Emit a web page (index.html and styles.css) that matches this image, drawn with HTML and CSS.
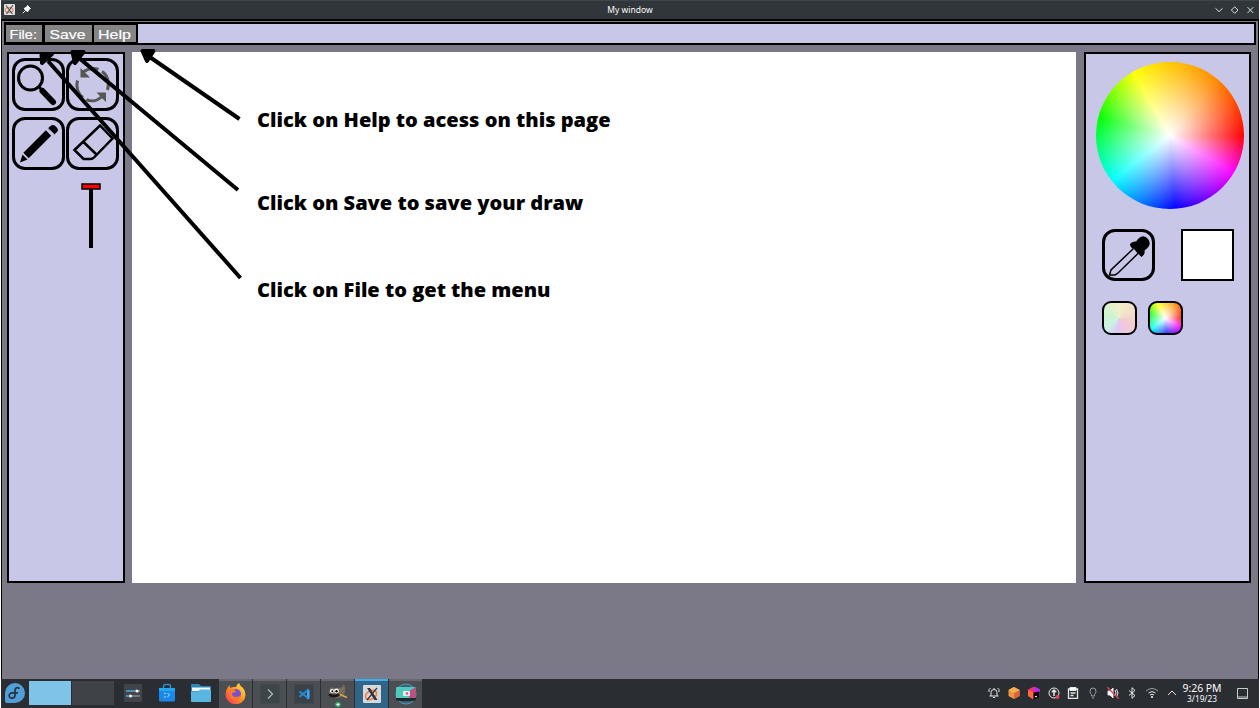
FILE: index.html
```html
<!DOCTYPE html>
<html lang="en">
<head>
<meta charset="utf-8">
<title>My window</title>
<link rel="stylesheet" href="styles.css">
</head>
<body>
<div class="screen">
  <header class="titlebar">
    <div class="title-left">
      <svg width="11" height="11" viewBox="0 0 11 11"><rect width="11" height="11" rx="1" fill="#dfe1e2"/><ellipse cx="5" cy="6" rx="4" ry="2.5" fill="none" stroke="#e58a5c" stroke-width="1.2"/><path d="M2 1.5 8.500 10M9 1 2.500 10" stroke="#50545a" stroke-width="1.200"/></svg>
      <svg width="9" height="9" viewBox="0 0 9 9"><path d="M5.500.5 8.500 3.500 7.200 4 5.800 6.500 4.800 6.300 2.700 4.200 2.500 3.200 5 2zM3.500 5.500.8 8.200" fill="#fff" stroke="#fff"/></svg>
    </div>
    <h1>My window</h1>
    <svg class="title-controls" width="42" height="12" viewBox="0 0 42 12" fill="none" stroke="#dfe1e2"><path d="M2.500 4.300 6 7.700 9.500 4.300M21.700 2.800 25 6.100 21.700 9.400 18.400 6.100zM34.500 3.200l5.800 5.800M40.300 3.200l-5.800 5.800"/></svg>
  </header>
  <main class="app">
    <nav class="menubar">
      <div class="menu menu-file"><svg width="36" height="18"><text x="3.500" y="13.500" textLength="27.500" lengthAdjust="spacingAndGlyphs">File:</text></svg></div>
      <div class="menu menu-save"><svg width="47" height="18"><text x="4.500" y="13.500" textLength="36" lengthAdjust="spacingAndGlyphs">Save</text></svg></div>
      <div class="menu menu-help"><svg width="42" height="18"><text x="4" y="13.500" textLength="33" lengthAdjust="spacingAndGlyphs">Help</text></svg></div>
    </nav>
    <div class="workspace">
      <aside class="panel tools">
        <div class="tool-grid">
          <div class="tool"><svg width="48" height="48" viewBox="0 0 48 48"><circle cx="15.500" cy="17" r="12" fill="none" stroke="#000" stroke-width="3"/><path d="M24 26 28.500 30.500" stroke="#000" stroke-width="3"/><path d="M27.500 30 38 41" stroke="#000" stroke-width="6" stroke-linecap="round"/></svg></div>
          <div class="tool"><svg width="48" height="48" viewBox="0 0 48 48" fill="none" stroke="#555753" stroke-width="3"><path d="M8.500 19.500C6.500 26 9 33 14 36.500M17.500 38.500C22 41 28 40 32.500 36M38.500 29C41 21 38 13.500 33 10.500M29.500 8.500C24.500 6.500 19 7.500 14 11"/><path d="M11.500 7v9.500H21zM37 41v-9.500H27.500z" fill="#555753" stroke="none"/></svg></div>
          <div class="tool"><svg width="48" height="48" viewBox="0 0 48 48"><path d="M11 35.500 33.500 13" stroke="#000" stroke-width="7.500"/><path d="M34.500 6.800Q37.500 3.500 40.500 6.200L42 7.700Q44 10 41.700 12.300L39.700 14.300 32.800 8.700zM7.500 34.500l5 5-7.500 3z"/><path d="M33 8l7 7" stroke="#88879c" stroke-width="1"/></svg></div>
          <div class="tool"><svg width="48" height="48" viewBox="0 0 48 48" fill="none" stroke="#000" stroke-width="2.500"><path d="M5.500 30 31 5.500 43.500 18.500 25 37.500Q23.500 39 21.500 39H14.500zM14.500 22 28 35"/></svg></div>
        </div>
        <svg class="slider" width="20" height="66" viewBox="0 0 20 66"><path d="M10 5v60" stroke="#000" stroke-width="4"/><rect x="1" y="1" width="18" height="5" fill="#f00" stroke="#000" stroke-width="1.500"/></svg>
      </aside>
      <section class="canvas">
        <p>Click on Help to acess on this page</p>
        <p>Click on Save to save your draw</p>
        <p>Click on File to get the menu</p>
      </section>
      <aside class="panel colors">
        <div class="wheel"></div>
        <div class="picker-row">
          <div class="tool"><svg width="48" height="48" viewBox="0 0 48 48"><path d="M28.500 16.500 6 38 4.500 43 10 43 12.500 41.500 33.500 21" fill="none" stroke="#000" stroke-width="1.500"/><path d="M25 12Q27 9 31 9.500L33.500 6.500Q39 2 43 7 47 12 42 16.500L39.500 18.500Q40.500 22 36.500 25L31.500 20 29 17Q25 15.500 25 12z"/></svg></div>
          <div class="current"></div>
        </div>
        <div class="swatches"><div class="swatch pale"></div><div class="swatch vivid"></div></div>
      </aside>
    </div>
  </main>
  <footer class="taskbar">
    <svg class="fedora" width="20" height="20" viewBox="0 0 20 20"><path d="M10 0a10 10 0 1 1 0 20H2Q0 20 0 18v-8A10 10 0 0 1 10 0z" fill="#519fd9"/><path d="M14 5.200C11.800 3.800 10 5.200 10 7.500v4.800c0 3.800-5.800 3.800-5.800.3 0-2 1.800-3 3.500-2.700h4.600" fill="none" stroke="#26323e" stroke-width="1.700" stroke-linecap="round"/></svg>
    <div class="pager"><i class="on"></i><i></i></div>
    <div class="launchers">
      <div><svg width="20" height="20" viewBox="0 0 20 20"><rect x="1" y="1" width="18" height="18" rx="1" fill="#414549"/><path d="M3 8h11M3 13h5" stroke="#4ba6db" stroke-width="1.500"/><path d="M14 8h3M8 13h9" stroke="#aaa" stroke-width="1"/><circle cx="14" cy="8" r="1.500" fill="#fff"/><circle cx="7.500" cy="13" r="1.500" fill="#fff"/></svg></div>
      <div><svg width="20" height="20" viewBox="0 0 20 20"><path d="M6.500 6V3.500Q6.500 1.500 8.500 1.500h3Q13.500 1.500 13.500 3.500V6" fill="none" stroke="#258cd8" stroke-width="1.500"/><path d="M2 5h16v12q0 1.500-1.500 1.500h-13Q2 18.500 2 17z" fill="#1989e8"/><path d="M2 5h16v3H2z" fill="#25a7ef"/><path d="m10.500 10 2 2-2 2" stroke="#b5e5ff" fill="none"/><circle cx="8" cy="10.500" r=".8" fill="#b5e5ff"/><circle cx="8" cy="14" r=".8" fill="#b5e5ff"/></svg></div>
      <div><svg width="20" height="20" viewBox="0 0 20 20"><path d="M0 2Q0 1 1 1h7l2 2h9q1 0 1 1v14q0 1-1 1H1q-1 0-1-1z" fill="#2988b8"/><path d="M1 4.500h18V8H1z" fill="#f5f7f8"/><path d="M0 8.500h7L9 6.500h11V18q0 1-1 1H1q-1 0-1-1z" fill="#58b6e3"/></svg></div>
    </div>
    <div class="tasks">
      <div class="task"><svg width="21" height="21" viewBox="0 0 21 21"><defs><linearGradient id="fox" x1="1" y1="0" x2="0" y2="1"><stop offset="0" stop-color="#fff04a"/><stop offset=".45" stop-color="#ff9a20"/><stop offset="1" stop-color="#f42a60"/></linearGradient></defs><path d="M11 4Q12 1 14 0q1 3 4 5 2.500 3 2.500 7A10 9.500 0 0 1 .5 11.500Q.5 7 3 4L4.500 2 5 5q2-1.500 6-1z" fill="url(#fox)"/><circle cx="11" cy="11" r="5" fill="#7651d4"/><path d="M5 6q4-1 6 3l-4 1q0 4 4 4 3 0 5-2-1 5-6 5-6-1-5-11z" fill="#ff7b2c"/></svg></div>
      <div class="task"><svg width="20" height="20" viewBox="0 0 20 20"><rect x=".5" y=".5" width="19" height="19" fill="#3d4548"/><path d="m8 5.500 4.500 4.500L8 14.500" fill="none" stroke="#b2babd" stroke-width="1.200"/></svg></div>
      <div class="task"><svg width="20" height="20" viewBox="0 0 20 20"><rect x=".5" y=".5" width="19" height="19" fill="#3a4149"/><path d="M13 4.500 15.500 6v8.500l-2.500 1z" fill="#3fa9f5"/><path d="M14 6 5.500 12.800M14 14 5.500 7.500" stroke="#258bd4" stroke-width="1.800"/></svg></div>
      <div class="task"><svg width="20" height="27" viewBox="0 0 20 27"><path d="M3 6Q8 9 14 6l2-3q2 4 1 8-1 5-7 6-5 0-7-3-3-1-2-4z" fill="#796b59"/><circle cx="4" cy="10" r="2" fill="#fff"/><circle cx="8.500" cy="10" r="2.400" fill="#fff"/><circle cx="4.300" cy="10.300" r="1"/><circle cx="8.500" cy="10.300" r="1.200"/><path d="M1 13.500q5 3 10 0" stroke="#191919" stroke-width="3" fill="none"/><path d="m12 13.500 7 3" stroke="#e1a143" stroke-width="1.500"/><circle cx="10" cy="23.500" r="2.800" fill="#27ae60"/><path d="M8.500 23.500h3M10 22v3" stroke="#fff"/></svg></div>
      <div class="task active"><svg width="18" height="18" viewBox="0 0 18 18"><rect width="18" height="18" rx="1" fill="#d6d9dc"/><ellipse cx="8" cy="10" rx="6" ry="4" fill="none" stroke="#ed8150" stroke-width="1.700" transform="rotate(-30 8 10)"/><path d="M4 3h3l7.500 12h-3z" fill="#30343a"/><path d="M14 3 4 15" stroke="#30343a" stroke-width="1.200"/></svg></div>
      <div class="task"><svg width="22" height="22" viewBox="0 0 22 22"><circle cx="11" cy="11" r="10" fill="#3d6170" stroke="#4d9cbb"/><path d="M1 5q0-1 1-1h17q2 0 2 1v11H1z" fill="#50c9bd"/><path d="m11 10 10-6v12h-5z" fill="#b94f83"/><path d="M1 15h20v2l-3 1H4l-3-1z" fill="#20282d"/><rect x="8" y="8" width="7" height="5" rx="1" fill="#eee"/><circle cx="12" cy="10.500" r="1.300" fill="#d05a83"/></svg></div>
    </div>
    <div class="tray">
      <svg viewBox="0 0 12 12"><path d="M3 9V5.500Q3 2.500 6 2.500t3 3V9M1.500 9h9M5 10.500h2M1 5V2.500L2.500 1M11 5V2.500L9.500 1M6 1v1"/></svg>
      <svg viewBox="0 0 12 12" class="flat"><path d="m6 0 5.500 3v6L6 12 .5 9V3z" fill="#ef963f"/><path d="m6 6 5.500-3v6L6 12z" fill="#dc633e"/><path d="m6 6L.5 3 6 0l5.500 3z" fill="#f5b151"/></svg>
      <svg viewBox="0 0 12 12" class="flat"><path d="m6-.5 6 3v6.500l-6 3.500L0 9V2.500z" fill="#f52d72"/><path d="m6-.5 6 3V6L6 4z" fill="#b32df0"/><path d="M0 3l5 2v7L0 9z" fill="#ff6a38"/><path d="m5.500 5.500 6-1V10L6 12.500l-.5-1z" fill="#080808"/><path d="M7 9.800l2-.5" stroke="#fff"/></svg>
      <svg viewBox="0 0 12 12"><circle cx="6" cy="6" r="5"/><path d="M6 9V3M3.800 5.200 6 3l2.200 2.200" stroke-width="1.500"/><circle cx="9.500" cy="10" r="2" fill="#da4453" stroke="none"/></svg>
      <svg viewBox="0 0 12 12"><path d="M1.500 2h9v9.500h-9zM3.500 6h5M3.500 8.500h3" stroke-width="1.300"/><path d="M3 .5h6v3H3z" fill="#fcfcfc"/></svg>
      <svg viewBox="0 0 12 12" class="dim"><path d="M4.500 9V7.500Q3 6.500 3 4.200 3 1 6 1t3 3.200Q9 6.500 7.500 7.500V9zM5 11h2"/></svg>
      <svg viewBox="0 0 12 12"><path d="M1 4h2l3-3v10L3 8H1z" fill="#fcfcfc"/><path d="M8 3q2 3 0 6M9.500 2q3 4 0 8"/><path d="m0 0 12 12" stroke="#da4453" stroke-width="1.300"/></svg>
      <svg viewBox="0 0 12 12"><path d="m3 3.500 6 5L6 11.300V.7l3 2.800-6 5"/></svg>
      <svg viewBox="0 0 12 12"><path d="M2.500 6q3.500-3 7 0M4 8q2-1.500 4 0"/><path d="M0 4q6-5 12 0" opacity=".6"/><circle cx="6" cy="10" r="1" fill="#fcfcfc" stroke="none"/></svg>
      <svg viewBox="0 0 12 12"><path d="m2 8 4-4 4 4"/></svg>
    </div>
    <div class="clock"><span>9:26 PM</span><small>3/19/23</small></div>
    <svg class="desktop" width="11" height="11" viewBox="0 0 11 11"><path d="M.5.5h10v10H.5zM.5 9h10" fill="none" stroke="#c8cacc"/></svg>
  </footer>
  <svg class="arrows" width="1260" height="708" viewBox="0 0 1260 708" fill="none" stroke="#000" stroke-width="4">
    <path d="M239.500 119 149 56.500M238 190 79 58M240.500 278 48 61"/>
    <path d="M142.500 51h11l-6.500 10zM72.500 52h11l-8.500 11zM41.500 54h10.500l-10 9z" fill="#000" stroke-width="4" stroke-linejoin="round"/>
  </svg>
</div>
</body>
</html>
```

FILE: styles.css
```css
* { box-sizing: border-box; }
body { margin: 0; background: #fff; font-family: "Noto Sans", sans-serif; overflow: hidden; }
.screen { position: relative; width: 1260px; height: 708px; padding: 0 1px; display: flex; flex-direction: column; }
svg { display: block; }
.titlebar { height: 19px; padding-bottom: 1px; background: #31363b; border-top: 1px solid #3e464b; display: grid; grid-template-columns: 1fr auto 1fr; align-items: center; color: #fcfcfc; }
.title-left { display: flex; align-items: center; gap: 7px; padding-left: 3px; }
.titlebar h1 { margin: 0; font-size: 8.5px; line-height: 16px; font-weight: 400; }
.title-controls { justify-self: end; margin-right: 4px; }
.app { height: 660px; background: #7b7987; border: 1px solid #000; border-top-width: 2px; border-bottom: 0; padding: 1px 2px 0; }
.menubar { height: 23px; width: 1252px; border: 2px solid #000; border-left-width: 1px; background: #c9c7e7; display: flex; }
.menu { height: 19px; background: #858585; border: 1px solid #000; border-width: 1px 2px 1px 0; }
.menu svg { overflow: visible; }
.menu text { fill: #fff; font-family: "Liberation Sans", sans-serif; font-size: 13px; stroke: #fff; stroke-width: .15; }
.menu-file { width: 40px; border-left-width: 1px; border-right-width: 3px; }
.menu-save { width: 49px; }
.menu-help { width: 44px; }
.workspace { display: flex; padding: 7px 0 0 3px; }
.panel { height: 531px; background: #c9c7e7; border: 2px solid #000; flex: none; }
.tools { width: 118px; padding: 4px 0 0 3px; }
.tool-grid { display: grid; grid-template-columns: 53px 53px; grid-auto-rows: 53px; gap: 6px 1px; }
.tool { width: 53px; height: 53px; border: 3px solid #000; border-radius: 13px; }
.slider { margin: 13px 0 0 69px; }
.canvas { width: 944px; height: 531px; margin: 0 8px 0 7px; padding: 53px 0 0 125px; background: #fff; flex: none; }
.canvas p { margin: 0; height: 83px; font: 800 20.040px/30px "Open Sans", sans-serif; color: #000; white-space: nowrap; }
.canvas p:nth-child(2) { height: 87px; }
.colors { width: 167px; padding: 8px 0 0 10px; }
.wheel { width: 147.500px; height: 147px; border-radius: 50%; background: radial-gradient(closest-side, #fff, #fff0), conic-gradient(#ffc800, #f80 40deg, red 90deg, magenta 120deg, blue 176deg, cyan 232deg, lime 284deg, yellow 330deg, #ffc800); }
.picker-row { display: flex; gap: 26px; margin: 20px 0 0 6px; }
.picker-row .tool { height: 52px; }
.current { width: 52.500px; height: 52px; border: 2px solid #000; background: #fff; }
.swatches { display: flex; gap: 11px; margin: 20px 0 0 6px; }
.swatch { width: 35px; height: 34px; border: 2px solid #000; border-radius: 9px; background: radial-gradient(circle farthest-corner, #fff, #fff0 90%), conic-gradient(#ffc800, #f70 45deg, red 90deg, magenta 120deg, blue 176deg, cyan 232deg, lime 284deg, yellow 330deg, #ffc800); }
.pale { background: conic-gradient(#f3edc8, #f3dfc9 60deg, #f2cdce 110deg, #efc8e0 155deg, #dec8f2 190deg, #caf4e3 235deg, #ccf3ce 280deg, #e2f4cb 330deg, #f3edc8); }
.taskbar { height: 29px; background: #2a2e32; display: flex; align-items: center; padding-bottom: 1px; }
.fedora { margin-left: 4px; }
.pager { display: flex; gap: 1px; margin-left: 4px; }
.pager i { width: 42px; height: 24px; background: #3f4347; }
.pager .on { background: #7fc3e9; }
.launchers { display: flex; margin-left: 2px; }
.launchers div { width: 34px; display: grid; place-items: center; }
.tasks { display: flex; gap: 1px; margin-left: 1px; align-self: flex-start; }
.task { width: 33px; height: 29px; padding-bottom: 2px; border-top: 2px solid #65696d; background: #4b4f53; display: grid; place-items: center; overflow: hidden; }
.task.active { background: #306588; border-color: #3daee9; }
.tray { display: flex; margin: 0 -.5px 0 auto; }
.tray svg { width: 12px; height: 12px; margin: 0 3.850px; fill: none; stroke: #e5e7e8; stroke-width: 1; }
.tray .flat { stroke: none; }
.tray .dim { stroke: #9b9ea1; }
.clock { width: 42px; display: flex; flex-direction: column; align-items: center; color: #fcfcfc; white-space: nowrap; }
.clock span { font-size: 10.400px; line-height: 11px; }
.clock small { font-size: 8.300px; line-height: 9px; }
.desktop { margin: 0 11px 0 14px; }
.arrows { position: absolute; inset: 0; pointer-events: none; }
```
